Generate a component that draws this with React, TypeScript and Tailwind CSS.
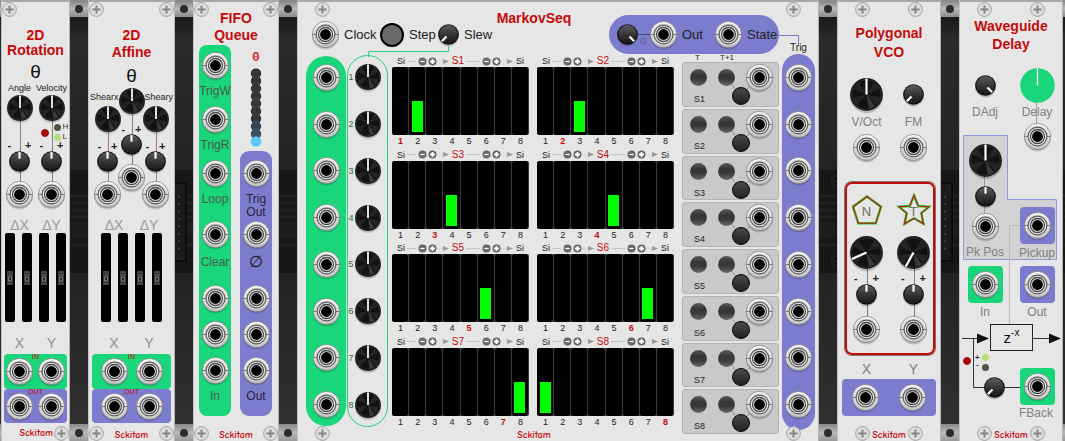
import React from "react";

const NARROW = "font-['Liberation_Sans_Narrow','Liberation_Sans',sans-serif]";

type Size = "sm" | "md" | "lg";

function Defs() {
  return (
    <svg className="absolute h-0 w-0" aria-hidden="true">
      <defs>
        <linearGradient id="metal" x1="0" y1="0" x2="0" y2="1">
          <stop offset="0" stopColor="#ffffff" />
          <stop offset="1" stopColor="#c0c0c0" />
        </linearGradient>
        <linearGradient id="cap" x1="0" y1="0" x2="0" y2="1">
          <stop offset="0" stopColor="#5c5c5c" />
          <stop offset="0.6" stopColor="#303030" />
          <stop offset="1" stopColor="#181818" />
        </linearGradient>
        <linearGradient id="lamp" x1="0" y1="0" x2="0" y2="1">
          <stop offset="0" stopColor="#5a5a5a" />
          <stop offset="0.35" stopColor="#363636" />
          <stop offset="0.6" stopColor="#383838" />
          <stop offset="1" stopColor="#686868" />
        </linearGradient>
      </defs>
    </svg>
  );
}

function Screw() {
  return (
    <svg viewBox="0 0 15 15" className="h-[15px] w-[15px] shrink-0" aria-hidden="true">
      <circle cx="7.5" cy="7.5" r="6.9" fill="#dedede" stroke="#9a9a9a" strokeWidth="0.9" />
      <path d="M7.5 3.4V11.6M3.4 7.5H11.6" stroke="#858585" strokeWidth="2" />
    </svg>
  );
}

function Jack({ name }: { name: string }) {
  return (
    <button type="button" aria-label={name} className="relative block h-[27px] w-[27px] shrink-0">
      <svg viewBox="0 0 27 27" className="h-[27px] w-[27px] overflow-visible">
        <circle cx="13.5" cy="15" r="13.4" fill="#000" opacity="0.16" />
        <circle cx="13.5" cy="13.5" r="13.1" fill="url(#metal)" stroke="#808080" strokeWidth="0.8" />
        <circle cx="13.5" cy="13.5" r="11" fill="#d8d8d8" />
        <path d="M0.5 13.5H4M23 13.5H26.5" stroke="#777" strokeWidth="1" />
        <circle cx="13.5" cy="13.5" r="9.4" fill="#ececec" stroke="#5c5c5c" strokeWidth="1.2" />
        <circle cx="13.5" cy="13.5" r="7" fill="#f2f2f2" stroke="#444" strokeWidth="1.3" />
        <circle cx="13.5" cy="13.5" r="5.4" fill="#000" />
      </svg>
    </button>
  );
}

const knobBox: Record<Size, string> = {
  sm: "h-[21px] w-[21px]",
  md: "h-[26px] w-[26px]",
  lg: "h-[33px] w-[33px]",
};

function Knob({ name, size = "md", angle = 0 }: { name: string; size?: Size; angle?: number }) {
  return (
    <span className={`relative block shrink-0 ${knobBox[size]}`}>
      <svg viewBox="0 0 30 30" className="block h-full w-full overflow-visible" aria-hidden="true">
        <circle cx="15" cy="17" r="15" fill="#000" opacity="0.2" />
        {size === "sm" ? (
          <>
            <circle cx="15" cy="15" r="14.8" fill="#0d0d0d" />
            <circle cx="15" cy="14.6" r="13.2" fill="url(#cap)" />
            <path d="M15 1.5V11" stroke="#fff" strokeWidth="3" transform={`rotate(${angle} 15 15)`} />
          </>
        ) : (
          <>
            <circle cx="15" cy="15" r="14.9" fill="#1c1c1c" />
            <circle cx="15" cy="15" r="13.4" fill="#121212" stroke="#383838" strokeWidth="0.6" />
            <path
              d="M15 15L3 9.5A13 13 0 0 1 8 4ZM15 15L22 4A13 13 0 0 1 27 9.5ZM15 15L27.6 18A13 13 0 0 1 24 24.5ZM15 15L2.4 18A13 13 0 0 0 6 24.5Z"
              fill="#242424"
            />
            <path d="M15 15L17 28A13 13 0 0 0 22.5 25.7Z" fill="#3a3a3a" />
            <path d="M15 0.5V15" stroke="#fff" strokeWidth="2" transform={`rotate(${angle} 15 15)`} />
          </>
        )}
      </svg>
      <input type="range" aria-label={name} className="absolute inset-0 h-full w-full cursor-pointer opacity-0" />
    </span>
  );
}

function Row({ h, children }: { h: string; children?: React.ReactNode }) {
  return <div className={`relative flex shrink-0 items-center justify-center ${h}`}>{children}</div>;
}

function Signs({ w = "w-[24px]", h }: { w?: string; h: string }) {
  return (
    <div className={`relative flex shrink-0 items-end justify-center ${h}`}>
      <span className={`flex shrink-0 justify-between text-[11px] leading-[10px] font-bold text-[#222] ${w}`}>
        <span>-</span>
        <span>+</span>
      </span>
    </div>
  );
}

function Wire({ className }: { className: string }) {
  return <span className={`absolute left-1/2 w-px bg-[#808080] ${className}`} />;
}

function Title({ lines, className }: { lines: string[]; className: string }) {
  return (
    <h2 className={`relative shrink-0 text-center text-[14px] font-bold whitespace-nowrap text-[#c40a0a] ${className}`}>
      {lines.map((l) => (
        <span key={l} className="block">
          {l}
        </span>
      ))}
    </h2>
  );
}

function Brand() {
  return (
    <span className="text-[10px] leading-4 font-bold text-[#c40a0a] font-['Comic_Neue','Comic_Sans_MS','Liberation_Sans_Narrow','Liberation_Sans',sans-serif]">
      Sckitam
    </span>
  );
}

function Footer({ pad = "px-px", shift = "" }: { pad?: string; shift?: string }) {
  return (
    <footer className={`relative z-10 mt-auto flex h-4 shrink-0 items-center justify-between ${pad}`}>
      <Screw />
      <span className={shift}>
        <Brand />
      </span>
      <Screw />
    </footer>
  );
}

function Module({ width, label, children }: { width: string; label: string; children: React.ReactNode }) {
  return (
    <section
      aria-label={label}
      className={`relative flex flex-col bg-[#e6e6e6] shadow-[inset_1px_0_0_#c4c4c4,inset_-1px_0_0_#b4b4b4,inset_0_2px_0_#a8a8a8] ${width}`}
    >
      {children}
    </section>
  );
}

function Hole() {
  return (
    <div className="flex h-full items-center justify-center">
      <span className="h-2 w-2 rounded-full bg-[#2c2c2c]" />
    </div>
  );
}

function Gap({ width = "w-[18px]", socket = false, bolts = false }: { width?: string; socket?: boolean; bolts?: boolean }) {
  return (
    <div className={`flex shrink-0 flex-col overflow-hidden bg-[#262626] ${width}`}>
      <div className="h-[17px] shrink-0 bg-linear-to-b from-[#8a8a8a] from-10% via-[#b8b8b8] via-50% to-[#8c8c8c]">
        {width === "w-[18px]" && <Hole />}
      </div>
      <div className="h-[153px] shrink-0 bg-linear-to-b from-[#191919] via-[#2b2b2b] via-15% to-[#232323]" />
      <div className="relative h-[103px] shrink-0 bg-[#171717]">
        <svg viewBox="0 0 18 103" className="h-[103px] w-[18px]" aria-hidden="true">
          <path d="M0 26H18M0 33H18M0 40H18M0 47H18" stroke="#212121" strokeWidth="3" />
          <path d="M0 60H18" stroke="#1d1d1d" strokeWidth="16" />
          <path d="M0 75H18" stroke="#212121" strokeWidth="3" />
          {socket && (
            <>
              <path d="M0 13H11V91H0" fill="#1b1b1b" stroke="#0c0c0c" strokeWidth="2" />
              <path d="M4 26V84" stroke="#5a5a5a" strokeWidth="1.4" strokeDasharray="1.4 6" />
            </>
          )}
          {bolts && (
            <g stroke="#2a2a2a" fill="#141414">
              <circle cx="18" cy="11" r="5.5" />
              <circle cx="18" cy="91" r="5.5" />
              <path d="M15 11H18M15 91H18" />
            </g>
          )}
        </svg>
      </div>
      <div className="flex-1 bg-linear-to-b from-[#232323] to-[#303030]" />
      <div className="h-[17px] shrink-0 bg-linear-to-b from-[#8a8a8a] via-[#b8b8b8] via-50% to-[#9a9a9a]">
        {width === "w-[18px]" && <Hole />}
      </div>
    </div>
  );
}

function Fader({ name }: { name: string }) {
  return (
    <span className="relative flex h-[89px] w-[10px] items-center justify-center rounded-[2px] bg-black">
      <svg viewBox="0 0 6 14" className="h-[14px] w-[6px]" aria-hidden="true">
        <rect width="6" height="14" fill="#333" />
        <path d="M0 1H6M0 4H6M0 13H6" stroke="#5c5c5c" />
        <rect x="1.5" y="6" width="3" height="4" fill="#222" stroke="#8c8c8c" strokeWidth="0.8" />
      </svg>
      <input type="range" aria-label={name} className="absolute inset-0 h-full w-full opacity-0 [writing-mode:vertical-lr]" />
    </span>
  );
}

function MatrixLower({ cols, inset }: { cols: string; inset: string }) {
  return (
    <>
      <div className={`grid h-[25px] shrink-0 items-end justify-center pt-[9px] text-center text-[14px] leading-4 text-[#9a9a9a] ${cols} ${NARROW}`}>
        <span>ΔX</span>
        <span>ΔY</span>
      </div>
      <div className="flex shrink-0 justify-center gap-[7px]">
        {["XX", "XY", "YX", "YY"].map((n) => (
          <Fader key={n} name={n} />
        ))}
      </div>
      <div className={`grid h-8 shrink-0 items-center justify-center pt-[10px] text-center text-[14px] leading-5 text-[#909090] ${cols} ${NARROW}`}>
        <span>X</span>
        <span>Y</span>
      </div>
      {[
        ["IN", "h-[35px] bg-[#1ad67a]"],
        ["OUT", "h-[34px] bg-[#7c7ccf]"],
      ].map(([t, c]) => (
        <div key={t} className={`relative grid shrink-0 items-center justify-center justify-items-center rounded-[4px] ${c} ${cols} ${inset}`}>
          <Jack name={`${t} X`} />
          <Jack name={`${t} Y`} />
          <span className="absolute inset-x-0 top-0 text-center font-['DejaVu_Sans',sans-serif] text-[7px] leading-[7px] text-[#c40a0a]">{t}</span>
        </div>
      ))}
    </>
  );
}

function Rotation() {
  return (
    <Module width="w-[69px] shrink-0" label="2D Rotation">
      <div className="flex h-[18px] shrink-0 items-center px-px">
        <Screw />
      </div>
      <Title lines={["2D", "Rotation"]} className="mt-[10px] leading-[15px]" />
      <div className="h-6 shrink-0 pt-[2px] text-center text-[19px] leading-6 text-[#111]">θ</div>
      <div className="grid grid-cols-[32px_32px] justify-center">
        {["Angle", "Velocity"].map((n) => (
          <div key={n} className="relative flex flex-col">
            <Wire className="top-6 bottom-6" />
            <span className={`flex h-3 justify-center text-[9px] leading-3 whitespace-nowrap text-[#222] ${NARROW}`}>{n}</span>
            <Row h="h-7">
              <Knob name={n} />
            </Row>
            <Signs h="h-7" />
            <Row h="h-[22px]">
              <Knob name={`${n} amount`} size="sm" />
            </Row>
            <Row h="mt-2 h-7">
              <Jack name={n} />
            </Row>
            {n === "Velocity" && (
              <>
                <span className="absolute top-[47px] left-[5px] h-2 w-2 rounded-full border border-[#8a2020] bg-[#b00000]" />
                <span className="absolute top-[40px] left-[18px] flex items-center gap-0.5 text-[8px] leading-[10px] text-[#333]">
                  <span className="h-[7px] w-[7px] rounded-full bg-[#4f5443]" />H
                </span>
                <span className="absolute top-[50px] left-[18px] flex items-center gap-0.5 text-[8px] leading-[10px] text-[#333]">
                  <span className="h-[7px] w-[7px] rounded-full bg-[#b5df78]" />L
                </span>
              </>
            )}
          </div>
        ))}
      </div>
      <MatrixLower cols="grid-cols-[32px_32px]" inset="mx-[3px]" />
      <footer className="mt-auto flex h-4 shrink-0 items-center justify-end gap-px pr-px">
        <Brand />
        <Screw />
      </footer>
    </Module>
  );
}

function Affine() {
  const side = (n: string, align: string) => (
    <div className="relative flex flex-col">
      <Wire className="top-8 bottom-6 bg-[#a07878]" />
      <span className={`mt-[3px] mb-[2px] flex h-3 text-[9px] leading-3 whitespace-nowrap text-[#222] ${align} ${NARROW}`}>{n}</span>
      <Row h="h-[27px]">
        <Knob name={n} />
      </Row>
      <Signs h="h-[19px]" w="w-[20px]" />
      <Row h="h-5">
        <Knob name={`${n} amount`} size="sm" />
      </Row>
      <Row h="mt-[9px] h-7">
        <Jack name={n} />
      </Row>
    </div>
  );
  return (
    <Module width="w-[87px] shrink-0" label="2D Affine">
      <div className="flex h-[18px] shrink-0 items-center justify-between px-px">
        <Screw />
        <Screw />
      </div>
      <Title lines={["2D", "Affine"]} className="mt-[9px] leading-[17px]" />
      <div className="h-[27px] shrink-0 pt-px text-center text-[19px] leading-[27px] text-[#111]">θ</div>
      <div className="grid grid-cols-[24px_24px_24px] justify-center">
        {side("Shearx", "justify-end pr-px")}
        <div className="relative flex flex-col">
          <Wire className="top-4 bottom-8" />
          <Row h="h-[26px]">
            <Knob name="Theta" />
          </Row>
          <Signs h="h-5" w="w-[20px]" />
          <Row h="h-5">
            <Knob name="Theta amount" size="sm" />
          </Row>
          <Row h="mt-[9px] h-7">
            <Jack name="Theta" />
          </Row>
        </div>
        {side("Sheary", "justify-start pl-px")}
      </div>
      <MatrixLower cols="grid-cols-[35px_35px]" inset="mx-1" />
      <Footer />
    </Module>
  );
}

function PortLabel({ h, tone, children }: { h: string; tone: string; children: React.ReactNode }) {
  return <div className={`flex shrink-0 flex-col items-center text-[12px] whitespace-nowrap ${h} ${tone} ${NARROW}`}>{children}</div>;
}

function Fifo() {
  return (
    <Module width="w-[86px] shrink-0" label="FIFO Queue">
      <div className="flex h-[18px] shrink-0 items-center justify-between px-px">
        <Screw />
        <Screw />
      </div>
      <Title lines={["FIFO", "Queue"]} className="-mt-2 leading-[17px]" />
      <div className="mt-px flex gap-[9px] pl-[6px]">
        <div className="flex w-8 flex-col items-center rounded-[8px] bg-[#1ad67a] pt-[7px]">
          <Jack name="TrigW" />
          <PortLabel h="h-[27px] leading-6" tone="text-[#4a5a50]">TrigW</PortLabel>
          <Jack name="TrigR" />
          <PortLabel h="h-[27px] leading-6" tone="text-[#4a5a50]">TrigR</PortLabel>
          <Jack name="Loop" />
          <PortLabel h="h-[34px] leading-6" tone="text-[#4a5a50]">Loop</PortLabel>
          <Jack name="Clear" />
          <PortLabel h="h-[37px] leading-7" tone="text-[#4a5a50]">Clear</PortLabel>
          <div className="flex flex-col gap-[9px]">
            <Jack name="In 1" />
            <Jack name="In 2" />
            <Jack name="In 3" />
          </div>
          <PortLabel h="h-8 leading-6" tone="text-[#4a5a50]">In</PortLabel>
        </div>
        <div className="flex w-8 flex-col">
          <span className="h-[23px] text-center font-['Liberation_Mono',monospace] text-[13px] leading-[26px] font-bold text-[#c83030]">0</span>
          <svg viewBox="0 0 12 83" className="mx-auto h-[83px] w-3" aria-hidden="true">
            {Array.from({ length: 10 }, (_, i) => (
              <g key={i}>
                <circle cx="6" cy={5.5 + i * 7.55} r="5.2" fill={i === 9 ? "#5cc8f5" : i === 8 ? "#38505c" : i === 7 ? "#37444c" : "#363636"} />
                {i < 9 && <path d={`M2.5 ${8.5 + i * 7.55}H9.5`} stroke="#666" strokeWidth="0.8" />}
              </g>
            ))}
          </svg>
          <div className="flex flex-col items-center rounded-[9px] bg-[#7c7ccf] pt-[9px]">
            <Jack name="Trig Out" />
            <PortLabel h="h-[34px] pt-[6px] leading-[13px]" tone="text-[#26263a]">
              <span>Trig</span>
              <span>Out</span>
            </PortLabel>
            <Jack name="Empty" />
            <PortLabel h="h-[37px] leading-7 text-[16px]" tone="text-[#111]">∅</PortLabel>
            <div className="flex flex-col gap-[9px]">
              <Jack name="Out 1" />
              <Jack name="Out 2" />
              <Jack name="Out 3" />
            </div>
            <PortLabel h="h-8 leading-6" tone="text-[#26263a]">Out</PortLabel>
          </div>
        </div>
      </div>
      <Footer />
    </Module>
  );
}

function PlusMinus() {
  return (
    <svg viewBox="0 0 19 9" className="h-[9px] w-[19px] shrink-0" aria-hidden="true">
      <circle cx="4.5" cy="4.5" r="4" fill="#666" />
      <path d="M2.4 4.5H6.6" stroke="#fff" strokeWidth="1.3" />
      <circle cx="14.5" cy="4.5" r="4" fill="#666" />
      <path d="M12 4.5H17M14.5 2V7" stroke="#fff" strokeWidth="1.8" />
    </svg>
  );
}

function Arrow() {
  return (
    <svg viewBox="0 0 6 5" className="h-[5px] w-[6px] shrink-0" aria-hidden="true">
      <path d="M0 0L6 2.5L0 5Z" fill="#999" />
    </svg>
  );
}

function Sequence({ index }: { index: number }) {
  const active = index % 8;
  return (
    <div className="flex flex-col">
      <div className={`flex h-[13px] items-center px-[5px] pt-px text-[9px] leading-3 text-[#222] ${NARROW}`}>
        <span>Si</span>
        <span className="mx-0.5 h-px w-[9px] bg-[#c4c4c4]" />
        <PlusMinus />
        <span className="h-px flex-1 bg-[#dadada]" />
        <Arrow />
        <span className="ml-[3px] text-[10px] text-[#c40a0a]">S{index}</span>
        <span className="mx-0.5 h-px w-[14px] bg-[#c4c4c4]" />
        <PlusMinus />
        <span className="h-px w-[6px] bg-[#dadada]" />
        <Arrow />
        <span className="ml-[3px]">Si</span>
      </div>
      <div className="grid h-[68px] grid-cols-8 rounded-[2px] bg-[#3a3a3a]">
        {Array.from({ length: 8 }, (_, i) => (
          <span key={i} className="relative mr-px flex items-end justify-center rounded-[3px] bg-black pb-[3px]">
            {i === active && <span className="h-[31px] w-[11px] bg-[#00ff00]" />}
            <input
              type="range"
              aria-label={`S${index} to state ${i + 1}`}
              className="absolute inset-0 h-full w-full opacity-0 [writing-mode:vertical-lr]"
            />
          </span>
        ))}
      </div>
      <div className={`grid h-3 grid-cols-8 text-center text-[9px] leading-3 text-[#222] ${NARROW}`}>
        {Array.from({ length: 8 }, (_, i) => (
          <span key={i} className={i + 1 === index ? "font-bold text-[#c40a0a]" : ""}>
            {i + 1}
          </span>
        ))}
      </div>
    </div>
  );
}

function Lamp() {
  return (
    <svg viewBox="0 0 17 17" className="h-[17px] w-[17px]" aria-hidden="true">
      <circle cx="8.5" cy="8.5" r="8.4" fill="url(#lamp)" />
    </svg>
  );
}

function StateCard({ n }: { n: number }) {
  return (
    <div className={`relative mb-[2px] rounded-[3px] border border-[#b4b4b4] bg-[#c9c9c9] ${NARROW}`}>
      <svg viewBox="0 0 97 45" className="absolute -top-px -left-px h-[45px] w-[97px]" aria-hidden="true">
        <path d="M45 16L58 33L78 16" fill="none" stroke="#909090" />
      </svg>
      <div className="relative grid grid-cols-[17px_17px_27px] items-center gap-x-[11px] pt-px pl-[7px]">
        <Lamp />
        <Lamp />
        <Jack name={`S${n} out`} />
      </div>
      <button
        type="button"
        aria-label={`S${n} set`}
        className="absolute top-[24px] left-[49px] h-[18px] w-[18px] rounded-full border border-black bg-linear-to-b from-[#4a4a4a] to-[#222]"
      />
      <span className="relative block pt-[2px] pl-[11px] text-[9px] leading-3 text-[#222]">S{n}</span>
    </div>
  );
}

const EIGHT = [1, 2, 3, 4, 5, 6, 7, 8];

function Markov() {
  const text = `shrink-0 text-[13px] leading-5 text-[#222] ${NARROW}`;
  return (
    <Module width="min-w-[522px] flex-1" label="MarkovSeq">
      <div className="flex h-[18px] shrink-0 items-center justify-between px-[18px]">
        <Screw />
        <Title lines={["MarkovSeq"]} className="self-start pr-12 leading-9" />
        <Screw />
      </div>
      <div className="relative -mt-[3px] flex h-[39px] shrink-0 items-center pl-[15px]">
        <Jack name="Clock" />
        <span className={`ml-[5px] w-9 ${text}`}>Clock</span>
        <button type="button" aria-label="Step" className="h-6 w-6 shrink-0 rounded-full border-2 border-black bg-[#6a6a6a]" />
        <span className={`ml-[5px] w-[29px] ${text}`}>Step</span>
        <Knob name="Slew" size="sm" angle={-135} />
        <span className={`ml-[5px] ${text}`}>Slew</span>
        <svg viewBox="0 0 82 12" className="absolute top-[31px] left-[71px] h-3 w-[82px]" aria-hidden="true">
          <path d="M80.5 0V5.5H0.5V11" fill="none" stroke="#2fd083" />
        </svg>
        <div className="relative mr-10 ml-auto flex h-[39px] w-[170px] items-center rounded-full bg-[#7c7ccf] pl-2">
          <Knob name="Out gain" size="sm" angle={135} />
          <span className={`relative h-full w-3 shrink-0 text-[9px] text-[#55558f] ${NARROW}`}>
            <span className="absolute top-[19px] left-0 h-px w-full bg-[#44446a]" />
            <span className="absolute top-[20px] left-[2px] leading-3">G</span>
          </span>
          <Jack name="Out" />
          <span className={`ml-[5px] w-[33px] ${text}`}>Out</span>
          <Jack name="State" />
          <span className={`ml-[5px] ${text}`}>State</span>
          <svg viewBox="0 0 21 12" className="absolute top-[20px] left-[170px] h-3 w-[21px]" aria-hidden="true">
            <path d="M0 0.5H19.5V11" fill="none" stroke="#7c7ccf" />
          </svg>
        </div>
      </div>
      <div className="-mb-[3px] flex h-[374px] shrink-0 pr-1 pl-[9px]">
        <div className="my-[2px] w-10 rounded-full bg-[#1ad67a]">
          <div className="-my-[2px] grid h-[374px] grid-rows-8 place-items-center">
            {EIGHT.map((n) => (
              <Jack key={n} name={`Input ${n}`} />
            ))}
          </div>
        </div>
        <div className="relative my-px ml-px w-[41px] rounded-full border border-[#1ad67a]">
          <div className="-my-[2px] grid h-[374px] grid-rows-8 place-items-center">
            {EIGHT.map((n) => (
              <div key={n} className="relative">
                <span className="absolute top-[7px] -left-[6px] text-[9px] leading-3 text-[#1f6a44]">{n}</span>
                <Knob name={`Level ${n}`} />
              </div>
            ))}
          </div>
        </div>
        <div className="ml-1 grid flex-1 grid-cols-2 grid-rows-4 gap-x-2">
          {EIGHT.map((n) => (
            <Sequence key={n} index={n} />
          ))}
        </div>
        <div className="relative mt-2 ml-2 grid h-[374px] w-[97px] grid-rows-8">
          <span className={`absolute -top-[9px] left-[13px] text-[8px] leading-[9px] text-[#222] ${NARROW}`}>T</span>
          <span className={`absolute -top-[9px] left-[38px] text-[8px] leading-[9px] text-[#222] ${NARROW}`}>T+1</span>
          {EIGHT.map((n) => (
            <StateCard key={n} n={n} />
          ))}
        </div>
        <div className="relative ml-[3px] h-[376px] w-[33px] rounded-full bg-[#7c7ccf]">
          <span className={`absolute -top-[12px] left-0 w-full text-center text-[10px] leading-3 text-[#222] ${NARROW}`}>Trig</span>
          <div className="grid h-[374px] grid-rows-8 place-items-center">
            {EIGHT.map((n) => (
              <Jack key={n} name={`Trig ${n}`} />
            ))}
          </div>
        </div>
      </div>
      <Footer pad="px-[18px]" shift="pr-12" />
    </Module>
  );
}

function ShapeKnob({ letter, angle }: { letter: string; angle: number }) {
  const d =
    letter === "N"
      ? "M18 3.5L32 13.7L26.7 30.3H9.3L4 13.7Z"
      : "M18 2.5L22.3 13L33 13.8L25.3 20.2L27.5 30.8L18 25.3L8.5 30.8L10.7 20.2L3 13.8L13.7 13Z";
  return (
    <div className="relative flex flex-col items-center">
      <Wire className="top-14 bottom-4" />
      <div className="relative h-9 w-9">
        <svg viewBox="0 0 36 36" className="h-9 w-9" aria-hidden="true">
          <path d={d} fill="#e6e6e6" stroke="#2fc52f" strokeWidth="2.4" />
          <path d={d} fill="none" stroke="#c01818" strokeWidth="1.1" />
        </svg>
        <span className={`absolute inset-0 text-center text-[13px] leading-[37px] text-[#6c6c6c] ${NARROW}`}>{letter}</span>
      </div>
      <Row h="mt-[5px] h-9">
        <Knob name={letter} size="lg" angle={angle} />
      </Row>
      <Signs h="h-[13px]" w="w-[25px]" />
      <Row h="h-[22px]">
        <Knob name={`${letter} amount`} size="sm" />
      </Row>
      <Row h="mt-[11px] h-[27px]">
        <Jack name={letter} />
      </Row>
    </div>
  );
}

function Polygonal() {
  const cols = "grid grid-cols-[47px_47px] justify-items-center items-center";
  const label = `text-[12px] leading-[18px] text-[#808080] ${NARROW}`;
  return (
    <Module width="w-[104px] shrink-0" label="Polygonal VCO">
      <div className="flex h-[18px] shrink-0 items-center justify-between px-[18px]">
        <Screw />
        <Screw />
      </div>
      <Title lines={["Polygonal", "VCO"]} className="mt-[6px] leading-[19px]" />
      <div className={`mt-[14px] h-[37px] pl-[6px] ${cols}`}>
        <Knob name="V/Oct" size="lg" />
        <Knob name="FM" size="sm" angle={-135} />
      </div>
      <div className={`h-[18px] pl-[6px] ${cols} ${label}`}>
        <span>V/Oct</span>
        <span>FM</span>
      </div>
      <div className={`mt-[2px] h-7 pl-[6px] ${cols}`}>
        <Jack name="V/Oct" />
        <Jack name="FM" />
      </div>
      <div className="mt-[21px] mr-[6px] ml-2 grid h-[173px] shrink-0 grid-cols-[47px_47px] content-start justify-center rounded-[7px] border-2 border-[#c40a0a] pt-[9px] shadow-[0_0_0_1px_#777]">
        <ShapeKnob letter="N" angle={-114} />
        <ShapeKnob letter="T" angle={-151} />
      </div>
      <div className={`h-6 shrink-0 pt-[4px] pl-[6px] ${cols} text-[14px] leading-5 text-[#808080] ${NARROW}`}>
        <span>X</span>
        <span>Y</span>
      </div>
      <div className={`mr-[5px] ml-[5px] h-[37px] shrink-0 justify-center rounded-[4px] bg-[#7c7ccf] ${cols}`}>
        <Jack name="X" />
        <Jack name="Y" />
      </div>
      <Footer pad="px-[18px]" />
    </Module>
  );
}

function PortBox({ name, tone }: { name: string; tone: string }) {
  return (
    <div className={`flex h-[37px] w-[35px] items-center justify-center rounded-[4px] ${tone}`}>
      <Jack name={name} />
    </div>
  );
}

function Waveguide() {
  const cols = "relative grid grid-cols-2 justify-items-center items-center";
  const label = `text-[12px] leading-[18px] whitespace-nowrap text-[#808080] ${NARROW}`;
  return (
    <Module width="w-[104px] shrink-0" label="Waveguide Delay">
      <svg viewBox="0 0 104 441" className="absolute top-0 left-0 h-[441px] w-[104px]" aria-hidden="true">
        <path d="M4.5 135.5H48.5V199.5H97.5V259.5H4.5Z" fill="#d2d2d2" stroke="#8f9ade" />
        <path d="M25.5 170V220M77.5 100V130" stroke="#999" />
        <path d="M50.5 324V225.5H62" fill="none" stroke="#bbb" />
        <path d="M3 338.5H20M14.5 338.5V387.5H62M74 338.5H90" fill="none" stroke="#333" />
        <path d="M18 333.5L30 338.5L18 343.5ZM90 333.5L102 338.5L90 343.5Z" fill="#111" />
      </svg>
      <div className="relative flex h-[18px] shrink-0 items-center justify-between px-[18px]">
        <Screw />
        <Screw />
      </div>
      <Title lines={["Waveguide", "Delay"]} className="-mt-px leading-[18px]" />
      <div className={`mt-[15px] h-[35px] ${cols}`}>
        <Knob name="DAdj" size="sm" angle={135} />
        <span className="relative block h-[35px] w-[35px]">
          <svg viewBox="0 0 35 35" className="h-[35px] w-[35px]" aria-hidden="true">
            <circle cx="17.5" cy="17.5" r="17.3" fill="#1ad67a" />
            <path d="M17.5 0.5V17.5" stroke="#fff" strokeWidth="1.4" />
          </svg>
          <input type="range" aria-label="Delay" className="absolute inset-0 h-full w-full opacity-0" />
        </span>
      </div>
      <div className={`h-[18px] ${cols} ${label}`}>
        <span>DAdj</span>
        <span>Delay</span>
      </div>
      <div className="relative grid grid-cols-2">
        <div className="flex flex-col items-center">
          <Row h="mt-[22px] h-[34px]">
            <Knob name="Pickup position" size="lg" />
          </Row>
          <Row h="mt-2 h-[22px]">
            <Knob name="Pickup position amount" size="sm" />
          </Row>
          <Row h="mt-[6px] h-[27px]">
            <Jack name="Pk Pos" />
          </Row>
          <span className={`h-[22px] pt-[3px] ${label}`}>Pk Pos</span>
        </div>
        <div className="flex flex-col items-center">
          <Row h="mt-[2px] h-[27px]">
            <Jack name="Delay" />
          </Row>
          <div className="mt-[57px]">
            <PortBox name="Pickup" tone="bg-[#7c7ccf]" />
          </div>
          <span className={`h-[18px] ${label}`}>Pickup</span>
        </div>
      </div>
      <div className={`mt-1 h-[37px] ${cols}`}>
        <PortBox name="In" tone="bg-[#1ad67a]" />
        <PortBox name="Out" tone="bg-[#7c7ccf]" />
      </div>
      <div className={`h-[18px] ${cols} ${label}`}>
        <span>In</span>
        <span>Out</span>
      </div>
      <div className="relative h-[99px] shrink-0">
        <div className="absolute top-[3px] left-[31px] flex h-[27px] w-[43px] items-center justify-center border border-[#222] bg-[#e6e6e6] text-[15px] leading-none text-[#111]">
          z<sup className="text-[10px] leading-none">-x</sup>
        </div>
        <span className="absolute top-9 left-[4px] h-2 w-2 rounded-full border border-[#8a2020] bg-[#b00000]" />
        <span className="absolute top-[33px] left-[16px] text-[8px] leading-[7px] font-bold text-[#333]">+</span>
        <span className="absolute top-[40px] left-[17px] text-[8px] leading-[7px] font-bold text-[#333]">-</span>
        <span className="absolute top-[33px] left-[23px] h-[7px] w-[7px] rounded-full bg-[#b5df78]" />
        <span className="absolute top-[43px] left-[23px] h-[7px] w-[7px] rounded-full bg-[#4f5443]" />
        <div className="absolute top-[56px] left-[25px]">
          <Knob name="Feedback" size="sm" angle={-135} />
        </div>
        <div className="absolute top-[47px] left-[61px]">
          <PortBox name="FBack" tone="bg-[#1ad67a]" />
        </div>
        <span className={`absolute top-[83px] left-[60px] ${label}`}>FBack</span>
      </div>
      <Footer pad="px-[18px]" />
    </Module>
  );
}

export default function App() {
  return (
    <main className="flex min-h-screen overflow-x-auto bg-[#262626] font-['Liberation_Sans',Arial,sans-serif]">
      <Defs />
      <Gap width="w-px" />
      <Rotation />
      <Gap />
      <Affine />
      <Gap socket />
      <Fifo />
      <Gap />
      <Markov />
      <Gap bolts />
      <Polygonal />
      <Gap socket />
      <Waveguide />
      <Gap width="w-[2px]" />
    </main>
  );
}
